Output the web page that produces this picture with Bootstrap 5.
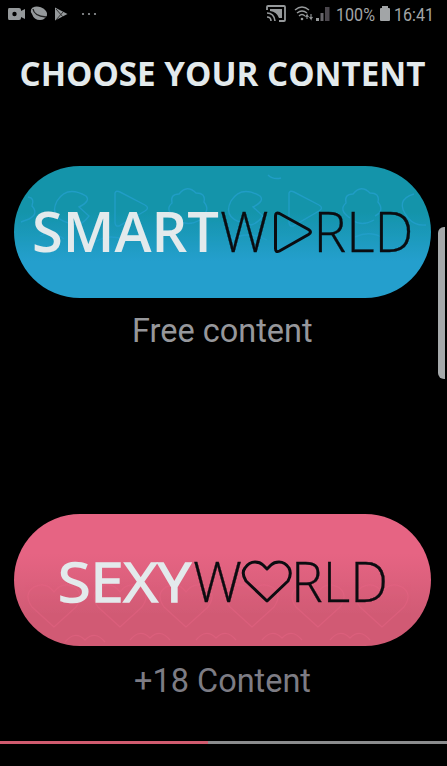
<!DOCTYPE html>
<html lang="en">
<head>
<meta charset="utf-8">
<meta name="viewport" content="width=device-width, initial-scale=1">
<title>Choose your content</title>
<link href="https://cdn.jsdelivr.net/npm/bootstrap@5.3.0/dist/css/bootstrap.min.css" rel="stylesheet">
<style>
body{background:#000;font-family:Roboto,sans-serif;height:766px;overflow:hidden}
.status-row{height:30px}
svg{display:block}
.status-row text{font-family:Roboto,sans-serif;fill:#a2a5a7}
.page-title{font:700 33.5px/46px "Open Sans",sans-serif;color:#e3eaec;margin-top:21px;height:46px}
.page-title svg{font:inherit}
.world{margin:69px 16px 0 14px;height:132px;border-radius:66px;overflow:hidden;display:block}
.smart{background:linear-gradient(#1494aa 0,#1494aa 34%,#249fcd 72%)}
.sexy{background:linear-gradient(#e66483 0,#e66483 30%,#d15b75 76%)}
.sexy-block{margin-top:163px}
.sexy-block .world{margin-top:0}
.world text{font-family:"Open Sans",sans-serif;font-size:55.5px}
.bold-part{font-weight:600;fill:#e3eaec}
.sexy .bold-part{font-weight:500;stroke:#e3eaec;stroke-width:1.5}
.thin-part{font-weight:300;fill:#0b0c10;stroke:#0b0c10;stroke-width:.3}
.caption-line{font-size:32.5px;line-height:40px;color:#96979b;margin-top:13px;height:40px}
.caption-dim{color:#7d7c84;margin-top:15px}
.scroll-thumb{position:absolute;left:438px;top:227px;width:7px;height:152px;background:#a6a9ab;border-radius:6px 0 0 6px}
.load-bar{height:3px;background:#8b8c8e;margin-top:40px;border-radius:0}
.load-bar .progress-bar{background:#d15b6f;width:46.6%}
</style>
<script src="https://cdn.jsdelivr.net/npm/bootstrap@5.3.0/dist/js/bootstrap.bundle.min.js"></script>
</head>
<body class="position-relative">
<header class="status-row d-flex justify-content-between">
<svg width="110" height="30" fill="#95999b">
<path d="M9 8h10q2 0 2 2v1l4-2v10l-4-2v1q0 2-2 2H9q-1 0-1-2V10q0-2 1-2z"/><circle cx="14.5" cy="14" r="2.2" fill="#000"/>
<ellipse cx="39" cy="12.500" rx="8.500" ry="5.500" transform="rotate(20 39 12.500)"/><path d="M32 14q2 6 8 6 5 0 6-4l-6 1z"/><path d="M33 9q1 7 13 8" fill="none" stroke="#222" stroke-width="1.300"/>
<path d="M55 7.500l12.500 6.500L55 20.500z"/><path d="M56 9l7 8M56 20l7-8" stroke="#333" stroke-width="1"/>
<circle cx="83" cy="14" r="1.100"/><circle cx="89" cy="14" r="1.100"/><circle cx="95" cy="14" r="1.100"/>
</svg>
<svg width="187" height="30" viewBox="260 0 187 30" fill="none" stroke="#96999b">
<path d="M267 10V7q0-1 1-1h16q1 0 1 1v13q0 1-1 1h-5" stroke-width="1.800"/><path d="M270 9h12v9h-3q-2-6-9-7z" fill="#96999b" stroke="none"/><path d="M267 13q7 0 8 8M267 17q4 0 4 4" stroke-width="1.600"/>
<path d="M295 10q7-6 14 0M297 13q5-4 10 0M299 16q3-3 6 0" stroke-width="1.400"/><circle cx="302" cy="19" r="1.300" fill="#96999b" stroke="none"/><path d="M307 19v-4l-1.500 2M307 15l1.500 2M311 14v5l-1.500-2M311 19l1.500-2" stroke-width="1.100"/>
<g stroke="none"><path d="M316 18h3v3h-3z" fill="#96999b"/><path d="M320.500 13h3v8h-3z" fill="#68666b"/><path d="M325 7h4.500v14H325z" fill="#4b474d"/><path d="M382 6h6v2h1q1 0 1 1v11q0 1-1 1h-8q-1 0-1-1V9q0-1 1-1h1z" fill="#a2a5a7"/>
<text x="336" y="20.500" font-size="18" textLength="39" lengthAdjust="spacingAndGlyphs">100%</text>
<text x="394" y="20.500" font-size="18" textLength="40" lengthAdjust="spacingAndGlyphs">16:41</text></g>
</svg>
</header>
<main>
<h1 class="page-title mb-0"><svg width="447" height="46" fill="#e3eaec"><text x="19.500" y="35" textLength="406" lengthAdjust="spacingAndGlyphs">CHOOSE YOUR CONTENT</text></svg></h1>
<section>
<a class="world smart" href="#" aria-label="Smart World">
<svg width="417" height="132" viewBox="14 166 417 132">
<defs><g id="motifs">
<path d="M77 225q-30-5-20-24 10-16 29-5 5 5-7 11l10 9q-5 7-12 9z"/>
<path d="M115 222v-29q1-3 5-1l25 13q5 3 0 6l-26 15q-4 1-4-4z"/>
<path d="M176 218q-12-8-4-15-2-9 7-9 8-10 17-1 10 0 8 9 7 9-3 14M178 220q10 7 22 0"/>
</g></defs>
<g fill="none" stroke="#249fcd" stroke-width="1.400" opacity=".8">
<path d="M28 197q7 1 4 9 7 8-3 13l-8 3"/>
<use href="#motifs"/><use href="#motifs" x="174"/><path d="M414 194q-20 6-6 24 7 8 18 7"/>
<path d="M268 175q5 5 13 3M40 236q12-7 24 3M95 242q14-9 30-2M230 240q18-10 37 0M355 237q15-7 28 1"/>
</g>
<text class="bold-part" x="32" y="252" textLength="187" lengthAdjust="spacingAndGlyphs">SMART</text>
<text class="thin-part" x="220" y="252" textLength="48.500" lengthAdjust="spacingAndGlyphs">W</text>
<path d="M275.500 216q0-4 4-2.500l29 16q4 2.500 0 5l-29 16.500q-4 2-4-2.500z" fill="none" stroke="#0b0c10" stroke-width="3"/>
<text class="thin-part" x="313.500" y="252" textLength="100" lengthAdjust="spacingAndGlyphs">RLD</text>
</svg></a>
<p class="caption-line mb-0"><svg width="447" height="40" fill="currentColor"><text x="132" y="31" textLength="180.500" lengthAdjust="spacingAndGlyphs">Free content</text></svg></p>
</section>
<section class="sexy-block">
<a class="world sexy" href="#" aria-label="Sexy World">
<svg width="417" height="132" viewBox="14 514 417 132">
<defs><path id="faint-heart" d="M54 627l-22-20q-9-13 2-20 12-6 20 5 8-11 20-5 11 7 2 20z"/></defs>
<g fill="none" stroke="#e66483" stroke-width="1.200" opacity=".5"><use href="#faint-heart"/><use href="#faint-heart" x="66"/><use href="#faint-heart" x="132"/><use href="#faint-heart" x="198"/><use href="#faint-heart" x="264"/><use href="#faint-heart" x="328"/>
<path d="M65 642q10-12 20-2 10-10 20 2M130 640q10-12 20-2 10-10 20 2M196 640q10-12 20-2 10-10 20 2M262 640q10-12 20-2 10-10 20 2M330 640q10-12 20-2 10-10 20 2"/></g>
<text class="bold-part" x="58" y="601.500" textLength="133" lengthAdjust="spacingAndGlyphs">SEXY</text>
<text class="thin-part" x="193" y="601.500" textLength="49" lengthAdjust="spacingAndGlyphs">W</text>
<path d="M267 601l-21-20q-5-8-1-13 4-6 10-6 5 0 8 3l4 4 4-4q3-3 8-3 6 0 10 6 3 6-1 13z" fill="none" stroke="#0b0c10" stroke-width="3" stroke-linejoin="round"/>
<text class="thin-part" x="291" y="601.500" textLength="97" lengthAdjust="spacingAndGlyphs">RLD</text>
</svg></a>
<p class="caption-line caption-dim mb-0"><svg width="447" height="40" fill="currentColor"><text x="134" y="31" textLength="177" lengthAdjust="spacingAndGlyphs">+18 Content</text></svg></p>
</section>
</main>
<div class="progress load-bar"><div class="progress-bar"></div></div>
<div class="scroll-thumb"></div>
</body>
</html>
